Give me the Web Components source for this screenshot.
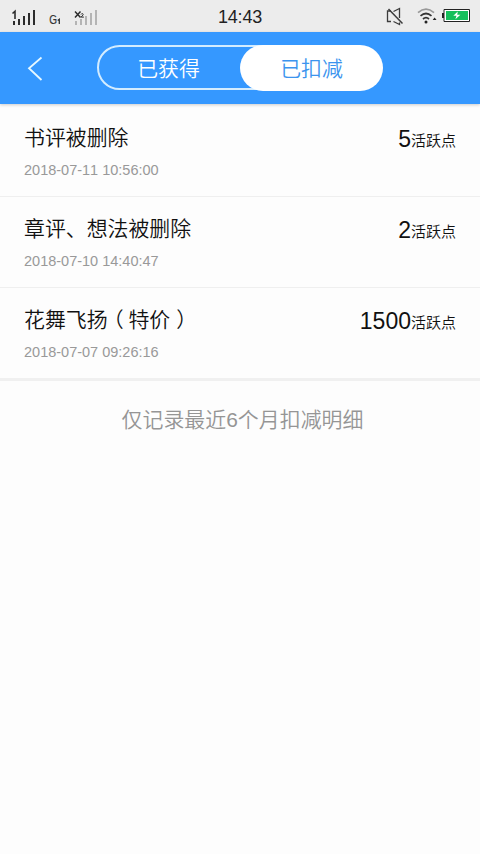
<!DOCTYPE html>
<html lang="zh-CN">
<head>
<meta charset="utf-8">
<title>活跃点明细</title>
<style>
html, body { margin: 0; height: 100%; background: #fdfdfd; }
body { font-family: "Liberation Sans", "Noto Sans CJK SC", sans-serif; font-kerning: none; overflow: hidden; }
</style>
</head>
<body>
<points-page></points-page>
<script>
function define(name, html) {
  const template = document.createElement('template');
  template.innerHTML = html;
  customElements.define(name, class extends HTMLElement {
    constructor() {
      super();
      this.attachShadow({ mode: 'open' }).append(template.content.cloneNode(true));
    }
  });
}

define('status-bar', `
<style>
:host { display: grid; grid-template-columns: 1fr auto 1fr; align-items: center; height: 32px; background: #ececec; color: #222; }
svg { display: block; }
.time { font-size: 18px; line-height: 20px; padding-top: 2px; letter-spacing: -.2px; }
.right { justify-self: end; }
</style>
<svg width="110" height="32" viewBox="0 0 110 32">
  <g fill="#2c2c2c"><rect x="13" y="21" width="2" height="4"/><rect x="18" y="19" width="2" height="6"/><rect x="23" y="16" width="2" height="9"/><rect x="28" y="13" width="2" height="12"/><rect x="33" y="10" width="2" height="15"/></g>
  <path d="M12.500 13.500l2.500-2.300V19" fill="none" stroke="#2c2c2c" stroke-width="1.600"/>
  <text transform="translate(49.200 23.500) scale(.8 1)" font-size="12.500" fill="#333" stroke="#333" stroke-width=".2">G</text><path d="M57.700 20.500l1.600-1.200V24" fill="none" stroke="#333" stroke-width="1.300"/>
  <g fill="#b4b4b4"><rect x="75" y="21" width="2" height="4"/><rect x="80" y="19" width="2" height="6"/><rect x="85" y="16" width="2" height="9"/><rect x="90" y="13" width="2" height="12"/><rect x="95" y="10" width="2" height="15"/></g>
  <path d="M75 11.500l5.500 6M80.500 11.500l-5.500 6" fill="none" stroke="#2c2c2c" stroke-width="1.500"/><path d="M81 14.400c.8-1.300 2.500-.9 2.100.4-.3.900-1.400 1.400-2 2.300h2.800" fill="none" stroke="#2c2c2c"/>
</svg>
<span class="time">14:43</span>
<svg class="right" width="110" height="32" viewBox="0 0 110 32">
  <g fill="none" stroke="#3c3c3c" stroke-width="1.300"><path d="M21 11h-3.500v10.500H21M23.500 11.500L29.500 8.500V18M23.500 21.500l6 3v-2"/><path d="M18.500 9L32.500 23.500" stroke-width="1.500"/></g>
  <g fill="none" stroke="#333" stroke-width="1.700"><path d="M48 12.600q8-6.800 16 0" stroke="#999"/><path d="M50.500 15.800q5.500-4.600 11 0"/><path d="M53 19q3-2.600 6 0"/></g>
  <circle cx="56" cy="21.900" r="1.500" fill="#222"/><path d="M62.700 20l1.900-2.500 1.900 2.500z" fill="#222"/>
  <path d="M74 9.500h25.500v12H74z" fill="#fff" stroke="#222"/><rect x="72" y="13" width="2" height="5" fill="#222"/>
  <rect x="76" y="11" width="22" height="9" fill="#15bf5b"/><path d="M87.800 11.600l-4.500 4.200h3.200l-1.100 3.500 5-4.500h-3.200z" fill="#fff"/>
</svg>`);

define('tab-switch', `
<style>
:host { display: grid; grid-template-columns: 143px 143px; height: 46px; width: 286px; box-sizing: border-box; position: relative;
  font-size: 20.900px; line-height: 48px; text-align: center; font-weight: 350; }
:host::before { content: ""; position: absolute; inset: 0 20px 1px 0; box-sizing: border-box; border: 2px solid #d3ecff; border-radius: 23px; }
::slotted(*) { position: relative; display: block; color: #fff; }
::slotted([selected]) { background: #fff; color: #3c94ee; border-radius: 23px; height: 46px; }
</style>
<slot></slot>`);

define('nav-bar', `
<style>
:host { display: flex; align-items: flex-start; box-sizing: border-box; height: 72px; padding: 13px 0 0 27px; background: #3598ff; box-shadow: 0 1px 3px rgba(0,0,0,.2); position: relative; }
svg { display: block; width: 70px; height: 46px; }
</style>
<svg viewBox="0 0 70 46"><path d="M14.500 12.500L2 23.200 14.500 35" fill="none" stroke="#e6f8ff" stroke-width="1.800"/></svg>
<slot></slot>`);

define('record-row', `
<style>
:host { display: flex; justify-content: space-between; box-sizing: border-box; height: 91px; padding: 17px 24px 0; border-bottom: 1px solid #efefef; }
:host([last]) { height: 93px; border-bottom: 3px solid #f0f0f0; }
.title { font-size: 20.900px; line-height: 30px; color: #111; font-weight: 350; }
.date { font-size: 14.500px; line-height: 20px; color: #999; margin-top: 7px; }
.points { display: flex; font-size: 23px; line-height: 32px; color: #111; white-space: nowrap; }
.unit { font-size: 15px; line-height: 36px; font-weight: 350; }
</style>
<div><div class="title"><slot></slot></div><div class="date"><slot name="date"></slot></div></div>
<div class="points"><slot name="points"></slot><span class="unit">活跃点</span></div>`);

define('points-page', `
<style>
:host { display: flex; flex-direction: column; width: 480px; height: 854px; background: #fdfdfd; }
.list { padding-top: 2px; }
.paren { font-feature-settings: "halt"; margin: 0 4.700px 0 5.700px; }
.paren.close { margin: 0 0 0 6px; }
.note { margin: 0; padding: 24px 0 0 5px; text-align: center; font-size: 20.950px; line-height: 30px; color: #959595; font-weight: 350; }
</style>
<status-bar></status-bar>
<nav-bar><tab-switch><span>已获得</span><span selected>已扣减</span></tab-switch></nav-bar>
<div class="list">
  <record-row>书评被删除<span slot="date">2018-07-11 10:56:00</span><span slot="points">5</span></record-row>
  <record-row>章评、想法被删除<span slot="date">2018-07-10 14:40:47</span><span slot="points">2</span></record-row>
  <record-row last>花舞飞扬<span class="paren">（</span>特价<span class="paren close">）</span><span slot="date">2018-07-07 09:26:16</span><span slot="points">1500</span></record-row>
</div>
<p class="note">仅记录最近6个月扣减明细</p>`);
</script>
</body>
</html>
